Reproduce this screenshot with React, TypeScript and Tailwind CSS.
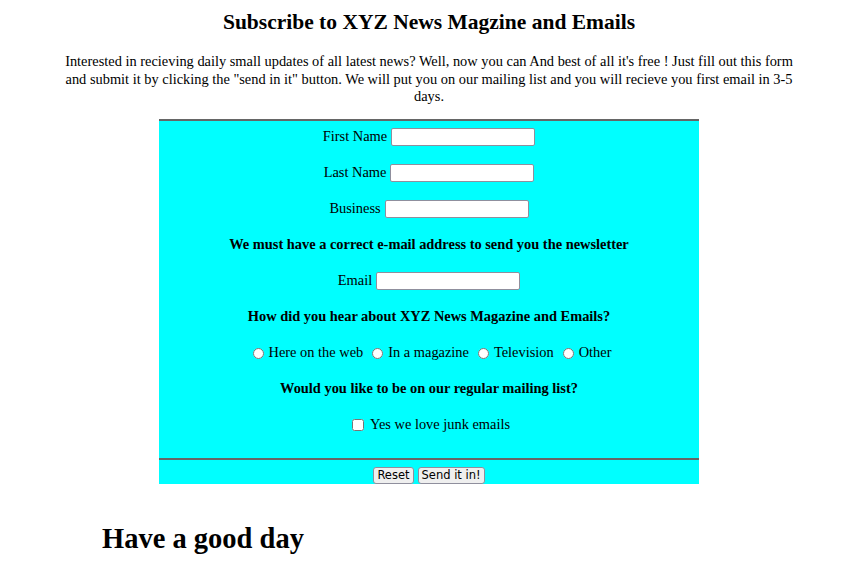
export default function App() {
  const row = "h-[18px] flex items-center justify-center";
  const input = "w-[144px] h-[18px] bg-white border border-[#8f8f9d] rounded-[2px] ml-1";
  const btn = "h-[17px] px-[3px] text-[11.5px] leading-none bg-[#efefef] border border-[#8f8f9d] rounded-[3px]";
  return (
    <div className="min-h-[564px] bg-white text-black pl-[13px] text-[14.4px]" style={{ fontFamily: '"Liberation Serif", "Times New Roman", serif' }}>
      <h2 className="pt-[11px] text-center text-[21.5px] font-bold leading-[23px]">Subscribe to XYZ News Magzine and Emails</h2>
      <p className="mt-[19px] w-[740px] mx-auto text-center leading-[17.5px]">
        Interested in recieving daily small updates of all latest news? Well, now you can And best of all it's free ! Just fill out this form and submit it by clicking the "send in it" button. We will put you on our mailing list and you will recieve you first email in 3-5 days.
      </p>
      <form className="mt-[13.5px] w-[540px] mx-auto bg-[#00ffff] border-t-2 border-[#666666]">
        <div className="pt-[7px] flex flex-col gap-[18px]">
          <div className={row}>First Name<input className={input} /></div>
          <div className={row}>Last Name<input className={input} /></div>
          <div className={row}>Business<input className={input} /></div>
          <div className={row + " font-bold"}>We must have a correct e-mail address to send you the newsletter</div>
          <div className={row}>Email<input className={input} /></div>
          <div className={row + " font-bold"}>How did you hear about XYZ News Magazine and Emails?</div>
          <div className={row + " pl-[6px]"}>
            <label className="flex items-center"><input type="radio" name="src" className="w-[11px] h-[11px] mr-[5px]" />Here on the web</label>
            <label className="flex items-center ml-[9px]"><input type="radio" name="src" className="w-[11px] h-[11px] mr-[5px]" />In a magazine</label>
            <label className="flex items-center ml-[9px]"><input type="radio" name="src" className="w-[11px] h-[11px] mr-[5px]" />Television</label>
            <label className="flex items-center ml-[9px]"><input type="radio" name="src" className="w-[11px] h-[11px] mr-[5px]" />Other</label>
          </div>
          <div className={row + " font-bold"}>Would you like to be on our regular mailing list?</div>
          <div className={row + " pl-[4px]"}>
            <label className="flex items-center"><input type="checkbox" className="w-[12px] h-[12px] mr-[6px]" />Yes we love junk emails</label>
          </div>
        </div>
        <div className="mt-[24px] border-t-2 border-[#666666] pt-[7px] flex justify-center gap-[4px]">
          <button type="reset" className={btn} style={{ fontFamily: '"DejaVu Sans", sans-serif' }}>Reset</button>
          <button type="button" className={btn} style={{ fontFamily: '"DejaVu Sans", sans-serif' }}>Send it in!</button>
        </div>
      </form>
      <h1 className="mt-[40px] ml-[89px] text-[28.5px] font-bold leading-[30px]">Have a good day</h1>
    </div>
  );
}
